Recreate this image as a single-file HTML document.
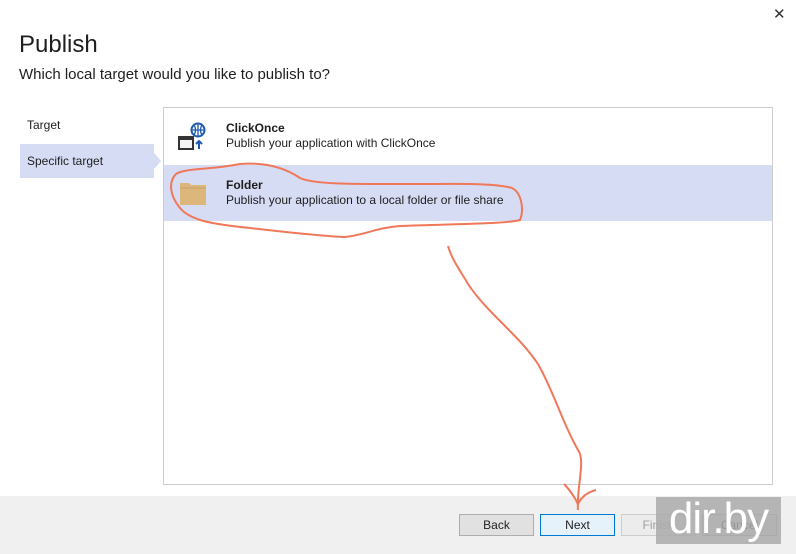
<!DOCTYPE html>
<html><head><meta charset="utf-8"><style>
*{margin:0;padding:0;box-sizing:border-box}
body{width:796px;height:554px;background:#fff;font-family:"Liberation Sans",sans-serif;position:relative;overflow:hidden;color:#1e1e1e}
.abs{position:absolute}
h1{position:absolute;left:19px;top:31px;font-size:24px;font-weight:normal;color:#1e1e1e}
.sub{left:19px;top:66px;font-size:15px}
.nav{font-size:12px}
.panel{left:163px;top:107px;width:610px;height:378px;border:1px solid #ccc}
.row{position:absolute;left:0;width:608px;height:56px}
.t{position:absolute;left:62px;font-size:12px}
.footer{left:0;top:496px;width:796px;height:58px;background:#f0f0f0}
.btn{position:absolute;top:514px;width:75px;height:22px;border:1px solid #adadad;background:#e1e1e1;font-size:12px;text-align:center;line-height:20px}
</style></head><body>
<div class="abs" style="left:773px;top:5px;font-size:15px;color:#333">✕</div>
<h1>Publish</h1>
<div class="abs sub">Which local target would you like to publish to?</div>
<div class="abs nav" style="left:27px;top:118px">Target</div>
<div class="abs" style="left:20px;top:144px;width:134px;height:34px;background:#d6dcf4"></div>
<div class="abs" style="left:154px;top:153px;width:0;height:0;border-top:8px solid transparent;border-bottom:8px solid transparent;border-left:7px solid #d6dcf4"></div>
<div class="abs nav" style="left:27px;top:154px">Specific target</div>
<div class="abs panel">
 <div class="row" style="top:0"></div>
 <svg class="abs" style="left:13px;top:14px" width="32" height="30">
  <rect x="2" y="15" width="14" height="12" fill="#f5f5f5" stroke="#333" stroke-width="2"/>
  <rect x="2" y="15" width="14" height="3" fill="#333"/>
  <circle cx="21" cy="8" r="6.5" fill="none" stroke="#1e5bb0" stroke-width="2"/>
  <path d="M14.5 8h13M21 1.5v13M17 3c2 3 2 7 0 10M25 3c-2 3-2 7 0 10" stroke="#1e5bb0" stroke-width="1.3" fill="none"/>
  <path d="M22 27v-8M19 22l3-3 3 3" stroke="#1e5bb0" stroke-width="2" fill="none"/>
 </svg>
 <div class="t" style="top:13px;font-weight:bold">ClickOnce</div>
 <div class="t" style="top:28px">Publish your application with ClickOnce</div>
 <div class="row" style="top:57px;background:#d6dcf4"></div>
 <svg class="abs" style="left:15px;top:72px" width="30" height="26">
  <path d="M1 3h9l2 2h15v20H1z" fill="#dcb67a"/>
  <path d="M1 8h26" stroke="#c9a266" stroke-width="1"/>
 </svg>
 <div class="t" style="top:70px;font-weight:bold">Folder</div>
 <div class="t" style="top:85px">Publish your application to a local folder or file share</div>
</div>
<div class="abs footer"></div>
<div class="btn" style="left:459px">Back</div>
<div class="btn" style="left:540px;border-color:#0078d7;background:#e5f1fb">Next</div>
<div class="btn" style="left:621px;color:#a0a0a0;border-color:#ccc;background:#ececec">Finish</div>
<div class="btn" style="left:702px">Cancel</div>
<div class="abs" style="left:656px;top:497px;width:125px;height:47px;background:rgba(170,170,170,0.85);color:#fff;font-size:44px;line-height:44px;text-align:center;letter-spacing:-1px">dir.by</div>
<svg class="abs" style="left:0;top:0" width="796" height="554" fill="none" stroke="#f0785a" stroke-width="2">
 <path d="M176 174C185 168 210 170 240 164C265 162 285 168 300 178C315 185 360 184 420 184C460 184 495 183 512 188C522 193 524 210 520 220C505 224 450 224 400 226C375 228 365 235 345 237C320 236 285 232 250 228C210 224 190 220 180 208C170 196 168 182 176 174Z"/>
 <path d="M448 246c4 14 12 24 20 38 20 30 50 50 70 80 16 28 24 58 40 86 8 10-2 40 0 60"/>
 <path d="M564 484c6 6 10 12 14 20 4-8 10-12 18-14"/>
</svg>
</body></html>
